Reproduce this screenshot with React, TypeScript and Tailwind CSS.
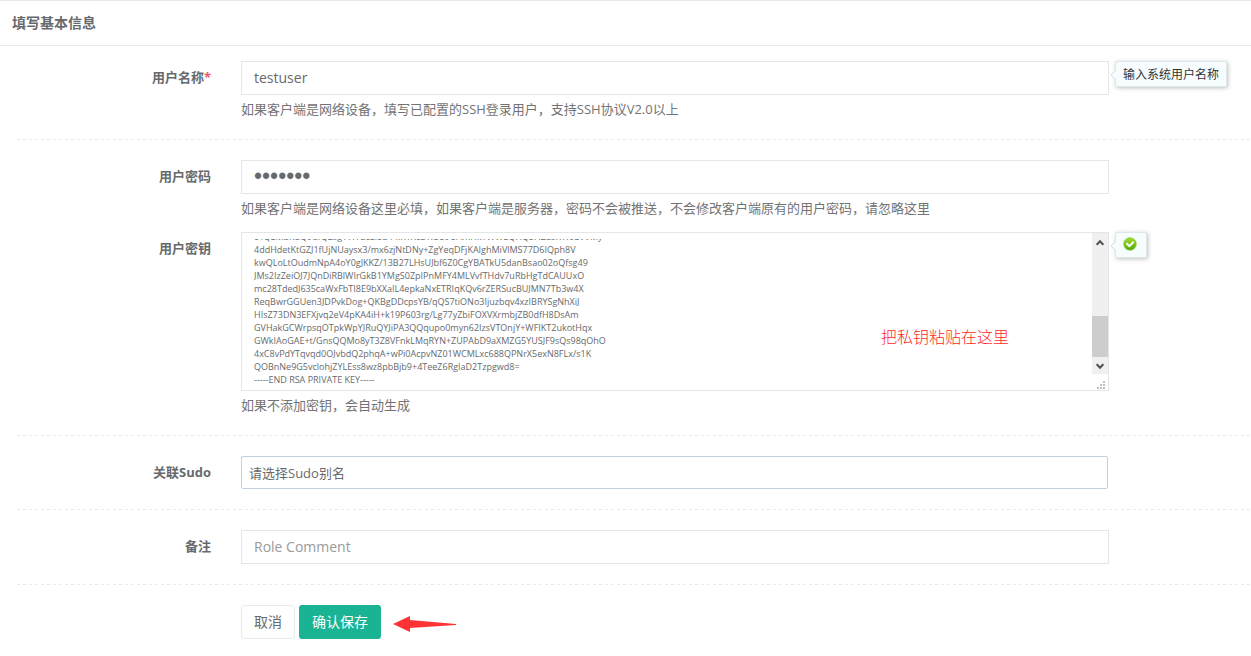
import { useLayoutEffect, useRef } from 'react';
import type { ReactNode } from 'react';

const privateKey = [
  'c4QEMbRdQ9ufQ2sgTTfTdcEi5b44lRTXcDKO59UAmHkTWWEQHQ5HZdsKTf0EVVMy',
  '4ddHdetKtGZJ1fUjNUaysx3/mx6zjNtDNy+ZgYeqDFjKAIghMiVlMS77D6IQph8V',
  'kwQLoLtOudmNpA4oY0gJKKZ/13B27LHsUJbf6Z0CgYBATkU5danBsao02oQfsg49',
  'JMs2IzZeiOJ7JQnDiRBlWIrGkB1YMgS0ZpIPnMFY4MLVvfTHdv7uRbHgTdCAUUxO',
  'mc28TdedJ635caWxFbTI8E9bXXaIL4epkaNxETRIqKQv6rZERSucBUJMN7Tb3w4X',
  'ReqBwrGGUen3JDPvkDog+QKBgDDcpsYB/qQS7tiONo3Ijuzbqv4xzIBRYSgNhXiJ',
  'HIsZ73DN3EFXjvq2eV4pKA4iH+k19P603rg/Lg77yZbiFOXVXrmbjZB0dfH8DsAm',
  'GVHakGCWrpsqOTpkWpYJRuQYJiPA3QQqupo0myn62IzsVTOnjY+WFIKT2ukotHqx',
  'GWkIAoGAE+t/GnsQQMo8yT3Z8VFnkLMqRYN+ZUPAbD9aXMZG5YUSJF9sQs98qOhO',
  '4xC8vPdYTqvqd0OJvbdQ2phqA+wPi0AcpvNZ01WCMLxc688QPNrX5exN8FLx/s1K',
  'QOBnNe9G5vclohjZYLEss8wz8pbBjb9+4TeeZ6RgIaD2Tzpgwd8=',
  '-----END RSA PRIVATE KEY-----',
].join('\n');

const inputClass =
  'block h-[34px] w-full border border-[#e5e6e7] bg-white px-3 pb-0.5 text-[#676a6c] outline-none placeholder:text-[#999]';

type RowProps = {
  id?: string;
  label?: string;
  required?: boolean;
  help?: string;
  tip?: ReactNode;
  children: ReactNode;
};

function Row({ id, label, required, help, tip, children }: RowProps) {
  return (
    <div className="flex">
      <div className="w-[211px] shrink-0 pt-1.5 text-right font-bold">
        {label && (
          <label htmlFor={id}>
            {label}
            {required && <span className="text-[#ed5565]">*</span>}
          </label>
        )}
      </div>
      <div className="ml-[30px] min-w-0 flex-1">
        {children}
        {help && <p className="mt-1 text-[#737373]">{help}</p>}
      </div>
      <div className="w-[142px] shrink-0 pl-1.5">{tip}</div>
    </div>
  );
}

function Tip({ children }: { children: ReactNode }) {
  return (
    <div className="relative inline-flex h-[26px] items-center rounded-xs border border-[#dfe7e9] bg-[#f7fdff] px-[7px] pt-px text-xs text-[#333] shadow-[1px_1px_4px_rgba(0,0,0,0.25)]">
      <svg className="absolute top-2 -left-[5px]" width="5" height="10" viewBox="0 0 5 10">
        <path d="M5 0L0 5L5 10Z" fill="#f7fdff" />
        <path d="M5 0L0 5L5 10" fill="none" stroke="#d5dcde" />
      </svg>
      {children}
    </div>
  );
}

function Divider() {
  return (
    <hr className="my-5 ml-[17px] h-px border-0 bg-[repeating-linear-gradient(90deg,#e7e9eb_0px,#e7e9eb_3px,transparent_3px,transparent_6px)]" />
  );
}

function CheckIcon() {
  return (
    <svg className="mr-0.5 mb-1" width="14" height="14" viewBox="0 0 14 14">
      <defs>
        <linearGradient id="green" x1="0" y1="0" x2="0" y2="1">
          <stop offset="0" stopColor="#a5e02c" />
          <stop offset="1" stopColor="#4ea908" />
        </linearGradient>
      </defs>
      <circle cx="7" cy="7" r="6.2" fill="url(#green)" stroke="#7cbf20" strokeWidth="0.8" />
      <path d="M3.4 6.2L6.3 9.1L10.7 4.7" fill="none" stroke="#fff" strokeWidth="2" />
    </svg>
  );
}

function KeyField() {
  const ref = useRef<HTMLTextAreaElement>(null);

  useLayoutEffect(() => {
    if (ref.current) ref.current.scrollTop = ref.current.scrollHeight;
  }, []);

  return (
    <div className="relative flex h-[159px] border border-[#e5e6e7]">
      <div className="flex-1 pt-1.5 pb-1 pl-3">
        <textarea
          id="key"
          ref={ref}
          defaultValue={privateKey}
          spellCheck={false}
          wrap="off"
          className="block h-full w-full resize-none overflow-hidden text-[9px] leading-[13px] outline-none"
        />
      </div>
      <div className="flex w-4 flex-col">
        <div className="flex h-[141px] flex-col items-center bg-[#f0f0f0]">
          <svg className="mt-1.5" width="8" height="7" viewBox="0 0 8 7">
            <path d="M0.7 5.8L4 2.2L7.3 5.8" fill="none" stroke="#505050" strokeWidth="2" />
          </svg>
          <div className="mt-[70px] h-[41px] w-full bg-[#cdcdcd]" />
          <svg className="mt-1.5" width="8" height="7" viewBox="0 0 8 7">
            <path d="M0.7 1.2L4 4.8L7.3 1.2" fill="none" stroke="#505050" strokeWidth="2" />
          </svg>
        </div>
        <svg className="mt-1.5 ml-1" width="10" height="10" viewBox="0 0 10 10" fill="#bfbfbf">
          <path d="M7 1h2v2H7zM4 4h2v2H4zM7 4h2v2H7zM1 7h2v2H1zM4 7h2v2H4zM7 7h2v2H7z" />
        </svg>
      </div>
      <p className="absolute top-[94px] right-[99px] text-base leading-5 font-light text-[#ff1f1f]">把私钥粘贴在这里</p>
    </div>
  );
}

export default function App() {
  return (
    <div className="border-t border-[#e7eaec] bg-white font-['Open_Sans','Noto_Sans_CJK_SC',sans-serif] text-[13px] leading-5 text-[#676a6c]">
      <header className="border-b border-[#e7eaec] px-3 py-3">
        <h5 className="text-sm font-bold">填写基本信息</h5>
      </header>

      <form className="pt-[15px] pb-4" onSubmit={(e) => e.preventDefault()}>
        <Row
          id="name"
          label="用户名称"
          required
          help="如果客户端是网络设备，填写已配置的SSH登录用户，支持SSH协议V2.0以上"
          tip={<Tip>输入系统用户名称</Tip>}
        >
          <input id="name" type="text" defaultValue="testuser" className={`${inputClass} text-sm`} />
        </Row>
        <Divider />
        <Row
          id="password"
          label="用户密码"
          help="如果客户端是网络设备这里必填，如果客户端是服务器，密码不会被推送，不会修改客户端原有的用户密码，请忽略这里"
        >
          <input
            id="password"
            type="password"
            defaultValue="1234567"
            className={`${inputClass} font-['Liberation_Sans',sans-serif] text-[23px]`}
          />
        </Row>
        <div className="mt-3.5">
          <Row
            id="key"
            label="用户密钥"
            help="如果不添加密钥，会自动生成"
            tip={
              <Tip>
                <CheckIcon />
              </Tip>
            }
          >
            <KeyField />
          </Row>
        </div>
        <Divider />
        <Row id="sudo" label="关联Sudo">
          <div className="pr-px">
            <select
              id="sudo"
              className="block h-[33px] w-full appearance-none rounded-xs border border-[#c3d0dc] bg-white px-[7px] outline-none"
            >
              <option>请选择Sudo别名</option>
            </select>
          </div>
        </Row>
        <Divider />
        <Row id="comment" label="备注">
          <input id="comment" type="text" placeholder="Role Comment" className={`${inputClass} text-sm`} />
        </Row>
        <Divider />
        <Row>
          <div className="flex items-center gap-1">
            <button type="button" className="h-[34px] rounded-[3px] border border-[#e7eaec] bg-white px-3 text-sm">
              取消
            </button>
            <button type="submit" className="h-[34px] rounded-[3px] bg-[#1ab394] px-[13px] text-sm text-white">
              确认保存
            </button>
            <svg className="mt-1 ml-2" width="64" height="18" viewBox="0 0 64 18">
              <path d="M0 9L17 1V5L63 9V10L17 13V17Z" fill="#ff3333" />
            </svg>
          </div>
        </Row>
      </form>
    </div>
  );
}
